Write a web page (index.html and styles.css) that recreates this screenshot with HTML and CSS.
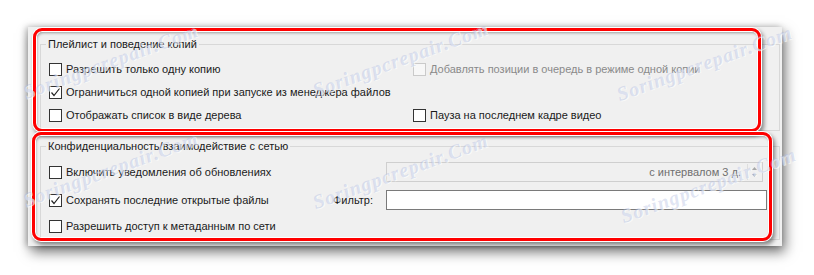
FILE: index.html
```html
<!DOCTYPE html>
<html lang="ru">
<head>
  <meta charset="UTF-8">
  <title>Настройки интерфейса</title>
  <link rel="stylesheet" href="styles.css">
</head>
<body>

<div class="window">
  <fieldset class="group group-playlist">
    <legend>Плейлист и поведение копий</legend>
    <div class="grid">
      <label class="check"><span class="box"></span>Разрешить только одну копию</label>
      <label class="check disabled"><span class="box"></span>Добавлять позиции в очередь в режиме одной копии</label>
      <label class="check wide"><span class="box checked"><svg width="11" height="11" viewBox="0 0 11 11"><polyline points="1.5,5.5 4,8.5 9.5,1.5" fill="none" stroke="#222" stroke-width="1.2"/></svg></span>Ограничиться одной копией при запуске из менеджера файлов</label>
      <label class="check"><span class="box"></span>Отображать список в виде дерева</label>
      <label class="check"><span class="box"></span>Пауза на последнем кадре видео</label>
    </div>
  </fieldset>

  <fieldset class="group group-net">
    <legend>Конфиденциальность/взаимодействие с сетью</legend>
    <div class="row row-first">
      <label class="check col-a"><span class="box"></span>Включить уведомления об обновлениях</label>
      <div class="spin">
        <span class="spin-text">с интервалом 3 д.</span>
        <span class="spin-arrows">
          <svg width="9" height="14" viewBox="0 0 9 14"><polygon points="4.5,2 7,5 2,5" fill="#a8a8a8"/><polygon points="2,9 7,9 4.5,12" fill="#a8a8a8"/></svg>
        </span>
      </div>
    </div>
    <div class="row row-second">
      <label class="check col-a"><span class="box checked"><svg width="11" height="11" viewBox="0 0 11 11"><polyline points="1.5,5.5 4,8.5 9.5,1.5" fill="none" stroke="#222" stroke-width="1.2"/></svg></span>Сохранять последние открытые файлы</label>
      <span class="filter-label">Фильтр:</span>
      <div class="field"></div>
    </div>
    <div class="row row-third">
      <label class="check col-a"><span class="box"></span>Разрешить доступ к метаданным по сети</label>
    </div>
  </fieldset>
</div>

<!-- выделение красным поверх окна -->
<div class="mark mark-one"></div>
<div class="mark mark-two"></div>

<!-- водяные знаки -->
<span class="wm wm1">Soringpcrepair.Com</span>
<span class="wm wm2">Soringpcrepair.Com</span>
<span class="wm wm3">Soringpcrepair.Com</span>
<span class="wm wm4">Soringpcrepair.Com</span>
<span class="wm wm5">Soringpcrepair.Com</span>
<span class="wm wm6">Soringpcrepair.Com</span>

</body>
</html>
```

FILE: styles.css
```css
body {
  margin: 0;
  padding: 27px 0 0 28px;
  background: #fff;
  font-family: 'Liberation Sans', Arial, sans-serif;
  font-size: 11px;
  color: #1a1a1a;
  height: 275px;
  box-sizing: border-box;
  overflow: hidden;
}
.window {
  width: 754px;
  height: 219px;
  box-sizing: border-box;
  background: #f0f0f0;
  padding: 10px 0 0 12px;
  box-shadow: 3px 6px 12px rgba(0,0,0,0.55), -2px 0 6px rgba(0,0,0,0.25);
}
.group {
  margin: 0;
  width: 740px;
  box-sizing: border-box;
  border: 1px solid #d8d8d8;
  padding: 0 0 0 8px;
}
.group legend {
  padding: 0 2px;
  margin-left: -3px;
  line-height: 14px;
  height: 14px;
}
.group-playlist {
  padding-top: 8px;
  padding-bottom: 5px;
}
.group-net {
  margin-top: 8px;
  padding-top: 9px;
  padding-bottom: 3px;
}
.grid {
  display: grid;
  grid-template-columns: 364px 1fr;
  grid-auto-rows: 20px;
  row-gap: 3px;
}
.wide {
  grid-column: 1 / 3;
}
.check {
  display: flex;
  align-items: center;
  white-space: nowrap;
  height: 20px;
}
.box {
  width: 13px;
  height: 13px;
  box-sizing: border-box;
  border: 1px solid #333;
  background: #fff;
  margin-right: 4px;
  display: flex;
  align-items: center;
  justify-content: center;
  flex: none;
}
.disabled {
  color: #8a8a8a;
}
.disabled .box {
  border-color: #cacaca;
  background: #f7f7f7;
}
.row {
  display: flex;
  align-items: center;
  height: 20px;
}
.row-second {
  margin-top: 8px;
}
.row-third {
  margin-top: 6px;
}
.col-a {
  width: 284px;
}
.spin {
  margin-left: 53px;
  width: 377px;
  height: 20px;
  box-sizing: border-box;
  border: 1px solid #cfcfcf;
  display: flex;
  align-items: center;
  justify-content: flex-end;
  color: #6f6f6f;
}
.spin-text {
  margin-right: 6px;
}
.spin-arrows {
  width: 13px;
  height: 16px;
  border-left: 1px solid #dedede;
  display: flex;
  align-items: center;
  justify-content: center;
  margin-right: 1px;
}
.filter-label {
  width: 53px;
}
.field {
  width: 381px;
  height: 20px;
  box-sizing: border-box;
  border: 1px solid #7a7a7a;
  background: #fff;
}
.mark {
  position: absolute;
  border: 3px solid #f00;
  border-radius: 9px;
  box-shadow: 0 0 0 1px #fff, 2px 3px 4px 1px rgba(0,0,0,0.45), inset 0 0 0 1px #fff, inset 1px 2px 3px rgba(0,0,0,0.35);
}
.mark-one {
  left: 33px;
  top: 28px;
  width: 722px;
  height: 98px;
}
.mark-two {
  left: 32px;
  top: 132px;
  width: 734px;
  height: 103px;
}
.wm {
  position: absolute;
  font-family: 'Liberation Serif', serif;
  font-style: italic;
  font-weight: bold;
  font-size: 20px;
  letter-spacing: 1px;
  color: rgba(175,188,225,0.4);
  text-shadow: 1px 1px 0 rgba(255,255,255,0.6);
  transform: rotate(-20deg);
  white-space: nowrap;
}
.wm1 { left: 18px; top: 50px; }
.wm2 { left: 308px; top: 48px; }
.wm3 { left: 612px; top: 52px; }
.wm4 { left: 18px; top: 158px; }
.wm5 { left: 308px; top: 160px; }
.wm6 { left: 616px; top: 174px; }
```
